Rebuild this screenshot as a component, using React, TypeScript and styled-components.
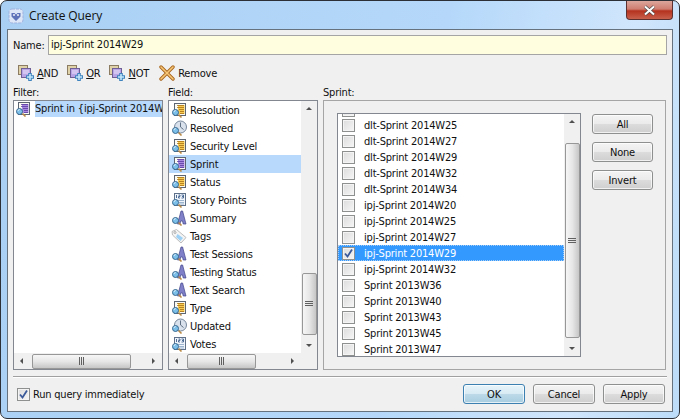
import React from 'react';
import styled, { createGlobalStyle } from 'styled-components';

const GlobalStyle = createGlobalStyle`
  html, body {
    margin: 0;
    padding: 0;
    background: #fff;
  }
  body {
    font-family: "DejaVu Sans Condensed", "DejaVu Sans", sans-serif;
    font-size: 11px;
    letter-spacing: -0.2px;
    color: #101010;
  }
`;

const Glass = styled.div`
  width: 680px;
  height: 419px;
  box-sizing: border-box;
  border: 1px solid #2c3036;
  border-radius: 7px;
  background: linear-gradient(100deg, #a9d0f3 0%, #b5d8fa 60%, #d0e6fc 85%, #bcdcf8 100%);
  padding: 0 6px 6px;
  display: flex;
  flex-direction: column;
  overflow: hidden;
`;

const TitleBar = styled.div`
  height: 28px;
  display: flex;
  align-items: flex-start;
  gap: 5px;
  flex-shrink: 0;
`;

const TitleText = styled.div`
  font-family: "Open Sans", sans-serif;
  font-size: 12px;
  letter-spacing: -0.1px;
  margin-top: 6px;
  color: #111;
`;

const CloseButton = styled.div`
  margin-left: auto;
  width: 47px;
  height: 19px;
  box-sizing: border-box;
  border: 1px solid #5d3030;
  border-top: none;
  border-radius: 0 0 4px 4px;
  background: linear-gradient(#dca69c 0%, #cf7d70 45%, #b5321f 55%, #c8604c 100%);
  display: flex;
  align-items: center;
  justify-content: center;
`;

const Dialog = styled.div`
  flex: 1;
  min-height: 0;
  box-sizing: border-box;
  border: 1px solid #66727e;
  background: #f0f0f0;
  display: flex;
  flex-direction: column;
  padding: 5px 5px 7px 5px;
`;

const NameRow = styled.div`
  display: flex;
  align-items: center;
  gap: 3px;
  height: 20px;
`;

const NameLabel = styled.span`
  width: 32px;
  flex-shrink: 0;
`;

const NameInput = styled.div`
  flex: 1;
  height: 20px;
  box-sizing: border-box;
  border: 1px solid #a5a5a5;
  background: #ffffe0;
  padding-left: 2px;
  line-height: 18px;
`;

const Toolbar = styled.div`
  display: flex;
  align-items: center;
  height: 20px;
  margin: 8px 0 0 4px;
  gap: 8px;
`;

const ToolItem = styled.div`
  display: flex;
  align-items: center;
  gap: 2px;
`;

const RemoveItem = styled(ToolItem)`
  margin-left: 2px;
  gap: 3px;
`;

const Key = styled.span`
  text-decoration: underline;
`;

const Columns = styled.div`
  display: flex;
  margin-top: 2px;
  height: 285px;
`;

const Column = styled.div<{ $width: number; $gap?: number }>`
  width: ${(p) => p.$width}px;
  margin-right: ${(p) => p.$gap ?? 0}px;
  display: flex;
  flex-direction: column;
`;

const Label = styled.div`
  height: 15px;
  line-height: 15px;
`;

const ListFrame = styled.div`
  height: 270px;
  box-sizing: border-box;
  border: 1px solid #828790;
  background: #fff;
  display: flex;
  flex-direction: column;
`;

const ListBody = styled.div`
  flex: 1;
  min-height: 0;
  display: flex;
`;

const ListRows = styled.div`
  flex: 1;
  min-width: 0;
  overflow: hidden;
`;

const FilterRow = styled.div`
  display: flex;
  align-items: center;
  height: 16px;
  padding-left: 1px;
  gap: 4px;
  white-space: nowrap;
`;

const FilterText = styled.span`
  flex: 1;
  min-width: 0;
  height: 16px;
  line-height: 16px;
  background: #b8d9fb;
  overflow: hidden;
`;

const FieldRow = styled.div<{ $selected?: boolean }>`
  display: flex;
  align-items: center;
  height: 18px;
  padding-left: 2px;
  gap: 3px;
  white-space: nowrap;
  background: ${(p) => (p.$selected ? '#b8d9fb' : 'transparent')};
`;

const HBar = styled.div<{ $inset: number }>`
  height: 16px;
  display: flex;
  align-items: center;
  background: #f0f0f0;
  padding-right: ${(p) => p.$inset}px;
  flex-shrink: 0;
`;

const VBar = styled.div`
  width: 16px;
  display: flex;
  flex-direction: column;
  align-items: center;
  background: #f0f0f0;
  flex-shrink: 0;
`;

const ArrowCell = styled.div`
  width: 16px;
  height: 16px;
  flex-shrink: 0;
  display: flex;
  align-items: center;
  justify-content: center;
`;

const Spacer = styled.div<{ $size: number; $grow?: boolean }>`
  flex: ${(p) => (p.$grow ? 1 : `0 0 ${p.$size}px`)};
`;

const HThumb = styled.div<{ $width: number }>`
  width: ${(p) => p.$width}px;
  height: 15px;
  box-sizing: border-box;
  border: 1px solid #979797;
  border-radius: 2px;
  background: linear-gradient(#f6f6f6, #e6e6e6 50%, #c6c6c6);
  display: flex;
  align-items: center;
  justify-content: center;
`;

const VThumb = styled.div<{ $height: number }>`
  width: 15px;
  height: ${(p) => p.$height}px;
  box-sizing: border-box;
  border: 1px solid #979797;
  border-radius: 2px;
  background: linear-gradient(90deg, #f6f6f6, #e6e6e6 50%, #c6c6c6);
  display: flex;
  align-items: center;
  justify-content: center;
`;

const SprintPanel = styled.div`
  height: 270px;
  box-sizing: border-box;
  border: 1px solid #a5a5a5;
  display: flex;
  align-items: flex-start;
  padding: 12px 12px 0 13px;
`;

const SprintList = styled.div`
  width: 244px;
  height: 244px;
  box-sizing: border-box;
  border: 1px solid #828790;
  background: #fff;
  display: flex;
  overflow: hidden;
  flex-shrink: 0;
`;

const SprintRows = styled.div`
  flex: 1;
  min-width: 0;
  overflow: hidden;
`;

// the list is scrolled: only the bottom edge of the box above dlt-Sprint 2014W25 shows
const PeekingBox = styled.div`
  height: 3px;
  padding-left: 4px;
  overflow: hidden;
  display: flex;
  align-items: flex-end;
`;

const SprintRowItem = styled.div<{ $selected?: boolean }>`
  display: flex;
  align-items: center;
  height: 16px;
  box-sizing: border-box;
  padding-left: 4px;
  gap: 9px;
  white-space: nowrap;
  background: ${(p) => (p.$selected ? '#3399ff' : 'transparent')};
  color: ${(p) => (p.$selected ? '#fff' : '#101010')};
  outline: ${(p) => (p.$selected ? '1px dotted #a8cdf5' : 'none')};
  outline-offset: -1px;
`;

const CheckBox = styled.div`
  width: 13px;
  height: 13px;
  box-sizing: border-box;
  border: 1px solid #8e8f8f;
  background: linear-gradient(135deg, #dcdcdc, #f6f6f6);
  box-shadow: inset 0 0 0 1px #f4f4f4;
  display: flex;
  align-items: center;
  justify-content: center;
  flex-shrink: 0;
`;

const SideButtons = styled.div`
  display: flex;
  flex-direction: column;
  gap: 8px;
  margin: 1px 0 0 11px;
`;

const Button = styled.div<{ $width: number; $default?: boolean }>`
  width: ${(p) => p.$width}px;
  height: 20px;
  box-sizing: border-box;
  border: 1px solid ${(p) => (p.$default ? '#3c7fb1' : '#8e8f8f')};
  border-radius: 3px;
  background: ${(p) =>
    p.$default
      ? 'linear-gradient(#e8f4fa 0%, #d8ebf4 48%, #bcd9e8 52%, #a7cde0 100%)'
      : 'linear-gradient(#f4f4f4 0%, #ebebeb 48%, #dcdcdc 52%, #cfcfcf 100%)'};
  box-shadow: inset 0 0 0 1px rgba(255, 255, 255, 0.7);
  display: flex;
  align-items: center;
  justify-content: center;
`;

const Divider = styled.div`
  height: 1px;
  background: #a0a0a0;
  box-shadow: 0 1px 0 #fff;
  margin: 6px 0 0 0;
`;

const Footer = styled.div`
  display: flex;
  align-items: center;
  margin-top: 7px;
  padding-right: 2px;
  height: 20px;
  gap: 8px;
`;

const RunCheck = styled.div`
  display: flex;
  align-items: center;
  gap: 3px;
  margin: 0 auto 0 4px;
`;

const Magnifier = () => (
  <>
    <path d="M7.5 12.5l3 3" stroke="#b98a45" strokeWidth="1.6" />
    <circle cx="4.5" cy="10.5" r="3" fill="#7cc0ea" stroke="#39688f" />
    <path d="M3 10a1.6 1.6 0 0 1 1.6-1.5" stroke="#dff2fc" fill="none" />
  </>
);

const ListIcon = ({ tone }: { tone: 'yellow' | 'purple' }) => {
  const fill = tone === 'yellow' ? '#f8cb53' : '#a88be0';
  const line = tone === 'yellow' ? '#a36a12' : '#55369c';
  return (
    <svg width="16" height="16" viewBox="0 0 16 16">
      <rect x="3.5" y="1.5" width="11" height="12" fill="#fbfbf4" stroke="#5d6472" />
      <rect x="7" y="3" width="6.5" height="9" fill={fill} />
      <path d="M6 3.5h7M6 5.5h7M8 7.5h5M9 9.5h4M9 11.5h4" stroke={line} strokeOpacity="0.75" />
      <Magnifier />
    </svg>
  );
};

const ClockIcon = () => (
  <svg width="16" height="16" viewBox="0 0 16 16">
    <circle cx="9.5" cy="7" r="6" fill="#d9e2ec" stroke="#75869b" />
    <path d="M9.5 2.5v4.5l3 2.5" stroke="#5f6f83" fill="none" />
    <Magnifier />
  </svg>
);

const NumberIcon = () => (
  <svg width="16" height="16" viewBox="0 0 16 16">
    <rect x="3.5" y="1.5" width="11" height="12" fill="#f0f5fb" stroke="#5f7188" />
    <path d="M5.5 3v3M7.5 3h1.5v1.5H7.5V6H9M10.5 3H12.5v3h-2M11 4.5h1.5" stroke="#3d5f8a" fill="none" strokeWidth="0.9" />
    <path d="M6 8.5h7M8 10.5h5M8 12h5" stroke="#9db4cf" />
    <Magnifier />
  </svg>
);

const TextIcon = () => (
  <svg width="16" height="16" viewBox="0 0 16 16">
    <path d="M6.5 14L10 1h1.6L15 14h-2.8l-.7-3H9.7L9 14z" fill="#7f80c8" stroke="#44468a" strokeWidth="0.7" />
    <Magnifier />
  </svg>
);

const TagIcon = () => (
  <svg width="16" height="16" viewBox="0 0 16 16">
    <path d="M1 3.5L5.5 1.5 15 9.5 10 15 1.5 7z" fill="#f4f4f4" stroke="#bcbcbc" />
    <path d="M6.5 6l5.5 4-2.5 3-4.5-4z" fill="#9cd0f4" />
    <circle cx="4" cy="4.5" r="1" fill="#fff" stroke="#aaa" />
  </svg>
);

const AddQueryIcon = () => (
  <svg width="18" height="18" viewBox="0 0 18 18">
    <rect x="1.5" y="1.5" width="9" height="9" fill="#e0d2a8" stroke="#8c7d62" />
    <rect x="4.5" y="4.5" width="9" height="9" fill="#b9a4e6" stroke="#6e6096" />
    <path d="M6 7h6M6 9h6" stroke="#ece4fa" />
    <path d="M13 9v8M9 13h8" stroke="#3e83bd" strokeWidth="3.6" />
    <path d="M13 10v6M10 13h6" stroke="#c5e7fa" strokeWidth="1.6" />
  </svg>
);

const RemoveIcon = () => (
  <svg width="16" height="16" viewBox="0 0 16 16">
    <path d="M2 2l12 12M14 2L2 14" stroke="#a8651c" strokeWidth="3.4" strokeLinecap="round" />
    <path d="M2 2l12 12M14 2L2 14" stroke="#f7c878" strokeWidth="1.6" strokeLinecap="round" />
  </svg>
);

const AppIconFrame = styled.svg`
  margin: 7px 0 0 1px;
  flex-shrink: 0;
`;

const AppIcon = () => (
  <AppIconFrame width="16" height="16" viewBox="0 0 16 16">
    <rect x="1" y="1" width="14" height="14" rx="3" fill="#dce6f7" stroke="#9fb0dd" strokeDasharray="3 1" />
    <path d="M8 13L3.5 8.5V5h3L8 6.5 9.5 5h3v3.5z" fill="#5d72b8" />
    <circle cx="6" cy="7" r="0.9" fill="#fff" />
    <circle cx="10" cy="7" r="0.9" fill="#fff" />
  </AppIconFrame>
);

const CloseGlyph = () => (
  <svg width="13" height="11" viewBox="0 0 13 11">
    <path d="M2 1.5l9 8M11 1.5l-9 8" stroke="#4a4a4a" strokeWidth="3.2" />
    <path d="M2 1.5l9 8M11 1.5l-9 8" stroke="#fff" strokeWidth="2" />
  </svg>
);

const Tick = () => (
  <svg width="11" height="11" viewBox="0 0 11 11">
    <path d="M2 5.5l2.5 3L9 1.5" stroke="#3b5a9a" strokeWidth="1.8" fill="none" />
  </svg>
);

const Arrow = ({ dir }: { dir: 'up' | 'down' | 'left' | 'right' }) => {
  const shapes = {
    up: '1,5 4,2 7,5',
    down: '1,3 7,3 4,6',
    left: '5,1 5,7 2,4',
    right: '3,1 3,7 6,4',
  };
  return (
    <svg width="8" height="8" viewBox="0 0 8 8">
      <polygon points={shapes[dir]} fill="#505050" />
    </svg>
  );
};

const Grip = ({ vertical }: { vertical?: boolean }) => (
  <svg width="8" height="8" viewBox="0 0 8 8">
    <path
      d={vertical ? 'M1.5 0v8M3.5 0v8M5.5 0v8' : 'M0 1.5h8M0 3.5h8M0 5.5h8'}
      stroke="#606060"
      strokeWidth="1"
    />
  </svg>
);

type IconKind = 'list' | 'purple' | 'clock' | 'number' | 'text' | 'tag';

const FieldIcon = ({ kind }: { kind: IconKind }) => {
  if (kind === 'list') return <ListIcon tone="yellow" />;
  if (kind === 'purple') return <ListIcon tone="purple" />;
  if (kind === 'clock') return <ClockIcon />;
  if (kind === 'number') return <NumberIcon />;
  if (kind === 'tag') return <TagIcon />;
  return <TextIcon />;
};

const FIELDS: { name: string; icon: IconKind }[] = [
  { name: 'Resolution', icon: 'list' },
  { name: 'Resolved', icon: 'clock' },
  { name: 'Security Level', icon: 'list' },
  { name: 'Sprint', icon: 'purple' },
  { name: 'Status', icon: 'list' },
  { name: 'Story Points', icon: 'number' },
  { name: 'Summary', icon: 'text' },
  { name: 'Tags', icon: 'tag' },
  { name: 'Test Sessions', icon: 'text' },
  { name: 'Testing Status', icon: 'text' },
  { name: 'Text Search', icon: 'text' },
  { name: 'Type', icon: 'list' },
  { name: 'Updated', icon: 'clock' },
  { name: 'Votes', icon: 'number' },
];

const SPRINTS = [
  'dlt-Sprint 2014W25',
  'dlt-Sprint 2014W27',
  'dlt-Sprint 2014W29',
  'dlt-Sprint 2014W32',
  'dlt-Sprint 2014W34',
  'ipj-Sprint 2014W20',
  'ipj-Sprint 2014W25',
  'ipj-Sprint 2014W27',
  'ipj-Sprint 2014W29',
  'ipj-Sprint 2014W32',
  'Sprint 2013W36',
  'Sprint 2013W40',
  'Sprint 2013W43',
  'Sprint 2013W45',
  'Sprint 2013W47',
];

const HorizontalBar = ({ thumbAt, thumb, inset }: { thumbAt: number; thumb: number; inset: number }) => (
  <HBar $inset={inset}>
    <ArrowCell>
      <Arrow dir="left" />
    </ArrowCell>
    <Spacer $size={thumbAt} />
    <HThumb $width={thumb}>
      <Grip vertical />
    </HThumb>
    <Spacer $size={0} $grow />
    <ArrowCell>
      <Arrow dir="right" />
    </ArrowCell>
  </HBar>
);

const VerticalBar = ({ thumbAt, thumb }: { thumbAt: number; thumb: number }) => (
  <VBar>
    <ArrowCell>
      <Arrow dir="up" />
    </ArrowCell>
    <Spacer $size={thumbAt} />
    <VThumb $height={thumb}>
      <Grip />
    </VThumb>
    <Spacer $size={0} $grow />
    <ArrowCell>
      <Arrow dir="down" />
    </ArrowCell>
  </VBar>
);

export default function App() {
  return (
    <>
      <GlobalStyle />
      <Glass>
        <TitleBar>
          <AppIcon />
          <TitleText>Create Query</TitleText>
          <CloseButton>
            <CloseGlyph />
          </CloseButton>
        </TitleBar>
        <Dialog>
          <NameRow>
            <NameLabel>Name:</NameLabel>
            <NameInput>ipj-Sprint 2014W29</NameInput>
          </NameRow>
          <Toolbar>
            <ToolItem>
              <AddQueryIcon />
              <span>
                <Key>A</Key>ND
              </span>
            </ToolItem>
            <ToolItem>
              <AddQueryIcon />
              <span>
                <Key>O</Key>R
              </span>
            </ToolItem>
            <ToolItem>
              <AddQueryIcon />
              <span>
                <Key>N</Key>OT
              </span>
            </ToolItem>
            <RemoveItem>
              <RemoveIcon />
              <span>Remove</span>
            </RemoveItem>
          </Toolbar>
          <Columns>
            <Column $width={150} $gap={5}>
              <Label>Filter:</Label>
              <ListFrame>
                <ListRows>
                  <FilterRow>
                    <ListIcon tone="purple" />
                    <FilterText>Sprint in {'{'}ipj-Sprint 2014W29{'}'}</FilterText>
                  </FilterRow>
                </ListRows>
                <HorizontalBar thumbAt={2} thumb={99} inset={1} />
              </ListFrame>
            </Column>
            <Column $width={150} $gap={5}>
              <Label>Field:</Label>
              <ListFrame>
                <ListBody>
                  <ListRows>
                    {FIELDS.map((field) => (
                      <FieldRow key={field.name} $selected={field.name === 'Sprint'}>
                        <FieldIcon kind={field.icon} />
                        {field.name}
                      </FieldRow>
                    ))}
                  </ListRows>
                  <VerticalBar thumbAt={156} thumb={62} />
                </ListBody>
                <HorizontalBar thumbAt={2} thumb={69} inset={17} />
              </ListFrame>
            </Column>
            <Column $width={343}>
              <Label>Sprint:</Label>
              <SprintPanel>
                <SprintList>
                  <SprintRows>
                    <PeekingBox>
                      <CheckBox />
                    </PeekingBox>
                    {SPRINTS.map((sprint) => (
                      <SprintRowItem key={sprint} $selected={sprint === 'ipj-Sprint 2014W29'}>
                        <CheckBox>{sprint === 'ipj-Sprint 2014W29' && <Tick />}</CheckBox>
                        {sprint}
                      </SprintRowItem>
                    ))}
                  </SprintRows>
                  <VerticalBar thumbAt={13} thumb={195} />
                </SprintList>
                <SideButtons>
                  <Button $width={61}>All</Button>
                  <Button $width={61}>None</Button>
                  <Button $width={61}>Invert</Button>
                </SideButtons>
              </SprintPanel>
            </Column>
          </Columns>
          <Divider />
          <Footer>
            <RunCheck>
              <CheckBox>
                <Tick />
              </CheckBox>
              Run query immediately
            </RunCheck>
            <Button $width={62} $default>
              OK
            </Button>
            <Button $width={62}>Cancel</Button>
            <Button $width={62}>Apply</Button>
          </Footer>
        </Dialog>
      </Glass>
    </>
  );
}
